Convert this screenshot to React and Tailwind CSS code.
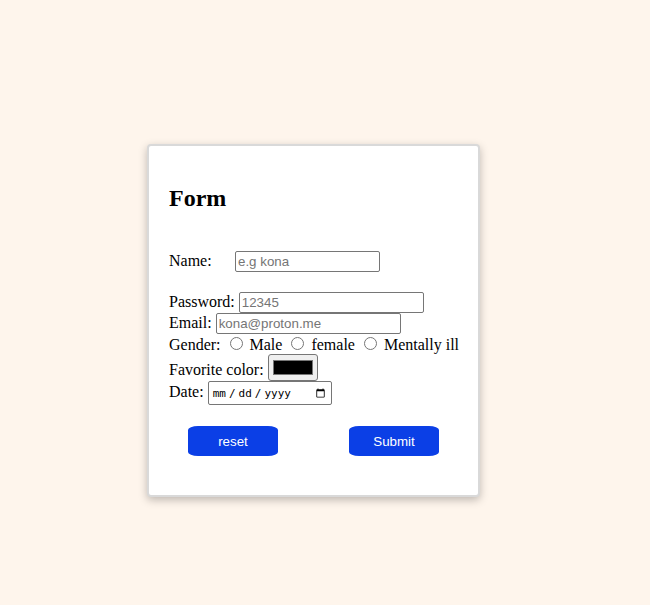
import React from 'react';

const field =
  "border border-[#767676] rounded-[2px] px-[2px] py-[1px] h-[21px] font-['Liberation_Sans',Arial,sans-serif] text-[13.33px] placeholder:text-[#757575] bg-white align-baseline";

const radio = 'w-[13px] h-[13px] ml-[5px] mr-[3px] mt-[3px] align-baseline';

const App = () => {
  return (
    <div className="min-h-screen bg-[#fef5ec] pt-[144px] pl-[147px] font-['Liberation_Serif','Times_New_Roman',serif] text-[16px] leading-[normal] text-black">
      <form
        onSubmit={(e) => e.preventDefault()}
        className="w-[333px] h-[353px] bg-white border-2 border-[#d9d9d9] rounded-[4px] shadow-[0_3px_9px_rgba(0,0,0,0.25)] px-[20px] pt-[20px]"
      >
        <h2 className="mt-[19px] text-[24px] font-bold">Form</h2>

        {/* Name */}
        <div className="mt-[39px]">
          <label className="inline-block w-[66px]">Name:</label>
          <input type="text" placeholder="e.g kona" className={`${field} w-[145px]`} />
        </div>

        {/* Password / email */}
        <div className="mt-[20px]">
          Password: <input type="password" placeholder="12345" className={`${field} w-[185px]`} />
        </div>
        <div>
          Email: <input type="email" placeholder="kona@proton.me" className={`${field} w-[185px]`} />
        </div>

        {/* Gender */}
        <div className="whitespace-nowrap">
          {'Gender: '}
          <input type="radio" name="gender" className={radio} />
          {' Male '}
          <input type="radio" name="gender" className={radio} />
          {' female '}
          <input type="radio" name="gender" className={radio} />
          {' Mentally ill'}
        </div>

        {/* Colour + date */}
        <div>
          Favorite color:{' '}
          <input
            type="color"
            defaultValue="#000000"
            className="w-[50px] h-[27px] px-[2px] py-[1px] bg-[#efefef] border border-[#767676] rounded-[3px] align-baseline"
          />
        </div>
        <div>
          Date:{' '}
          <input
            type="date"
            className="w-[124px] h-[24px] px-[3px] py-[1px] border border-[#767676] rounded-[2px] font-['DejaVu_Sans_Mono',monospace] text-[11px] bg-white align-baseline [&::-webkit-datetime-edit-text]:px-[2px] [&::-webkit-calendar-picker-indicator]:ml-[2px]"
          />
        </div>

        {/* Buttons */}
        <div className="mt-[21px] ml-[19px] flex gap-[71px]">
          <button
            type="reset"
            className="w-[90px] h-[30px] bg-[#0b3fe6] text-white rounded-[10px/4px] font-['Liberation_Sans',Arial,sans-serif] text-[13.33px]"
          >
            reset
          </button>
          <button
            type="submit"
            className="w-[90px] h-[30px] bg-[#0b3fe6] text-white rounded-[10px/4px] font-['Liberation_Sans',Arial,sans-serif] text-[13.33px]"
          >
            Submit
          </button>
        </div>
      </form>
    </div>
  );
};

export default App;
